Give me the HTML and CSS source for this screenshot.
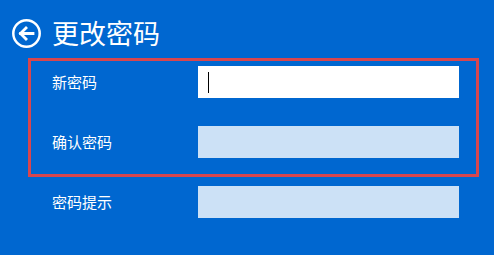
FILE: index.html
```html
<!DOCTYPE html>
<html lang="zh-CN">
<head>
  <meta charset="UTF-8">
  <meta name="viewport" content="width=device-width, initial-scale=1.0">
  <title>更改密码</title>
  <link rel="stylesheet" href="styles.css">
</head>
<body>

<div class="header">
  <svg class="back-icon" width="29" height="29" viewBox="0 0 29 29">
    <circle cx="14.5" cy="14.5" r="13.2" fill="none" stroke="#fff" stroke-width="2.5"/>
    <path d="M21 14.5H8.5M14 9L8.5 14.5L14 20" fill="none" stroke="#fff" stroke-width="2.8" stroke-linecap="square"/>
  </svg>
  <div class="title">更改密码</div>
</div>

<!-- Zone mise en évidence -->
<div class="highlight">
  <div class="row">
    <div class="label">新密码</div>
    <div class="field active"><span class="caret"></span></div>
  </div>
  <div class="row">
    <div class="label">确认密码</div>
    <div class="field"></div>
  </div>
</div>

<div class="row hint-row">
  <div class="label">密码提示</div>
  <div class="field"></div>
</div>

</body>
</html>
```

FILE: styles.css
```css
/* Page */
body {
  margin: 0;
  background: #0067d0;
  font-family: "Noto Sans CJK SC", "Noto Sans", sans-serif;
  color: #fff;
}
/* En-tête */
.header {
  display: flex;
  align-items: center;
  gap: 11px;
  height: 29px;
  padding: 19px 0 0 12px;
  margin-bottom: 10px;
}
.back-icon {
  display: block;
}
.title {
  font-size: 27px;
  line-height: 26px;
  margin-top: -2px;
}
/* Cadre rouge */
.highlight {
  box-sizing: border-box;
  width: 451px;
  margin-left: 28px;
  border: 3px solid #d8464e;
  padding: 5px 17px 16px 21px;
  display: flex;
  flex-direction: column;
  gap: 28px;
}
/* Lignes du formulaire */
.row {
  display: flex;
  align-items: center;
  height: 32px;
}
.label {
  width: 146px;
  font-size: 15px;
  margin-top: -2px;
}
.field {
  flex: 1;
  height: 32px;
  background: #cce1f6;
  display: flex;
  align-items: center;
}
.field.active {
  background: #fff;
}
.caret {
  width: 1px;
  height: 21px;
  margin-left: 10px;
  background: #000;
}
.hint-row {
  width: 407px;
  margin: 9px 0 0 52px;
}
```
